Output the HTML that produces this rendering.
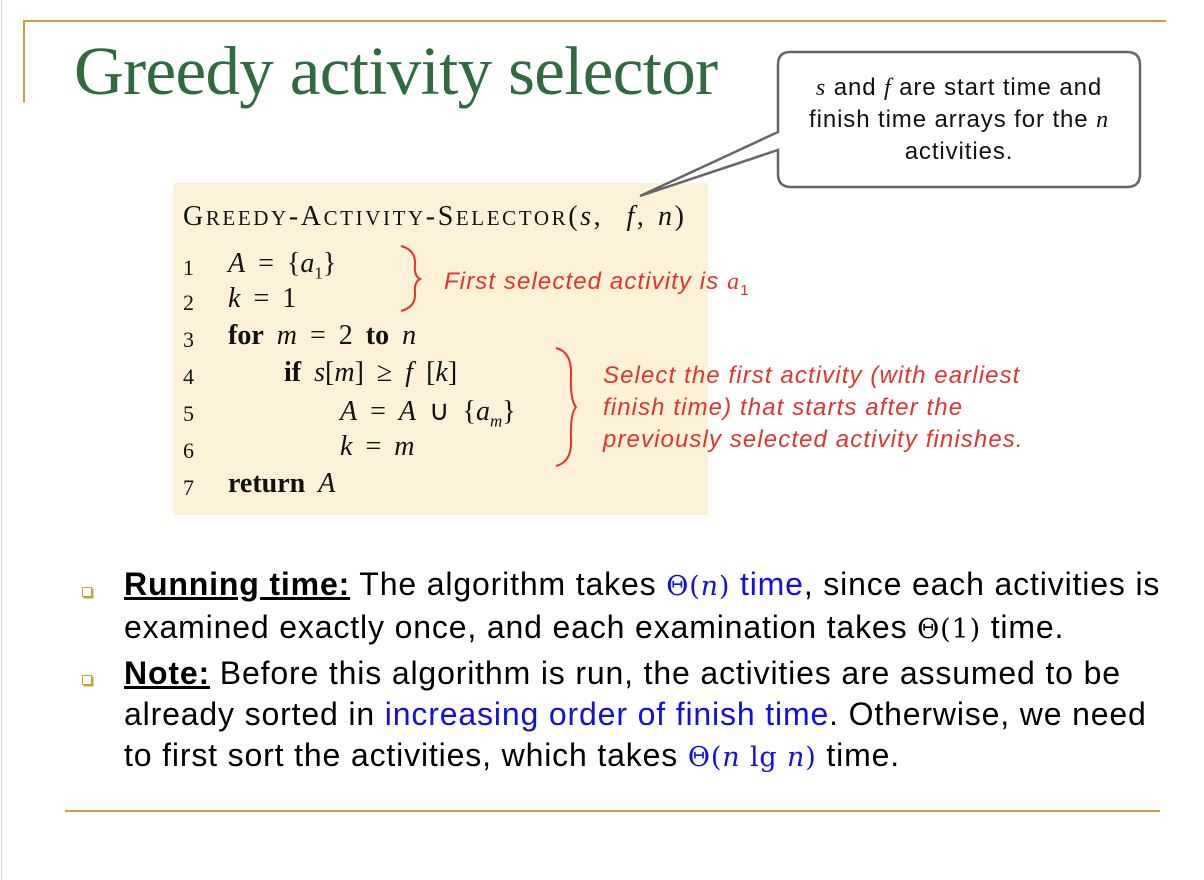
<!DOCTYPE html>
<html><head><meta charset="utf-8"><style>
body{margin:0;width:1204px;height:880px;background:#fff;position:relative;overflow:hidden;font-family:"Liberation Sans",sans-serif}
.a{position:absolute;white-space:nowrap}
.serif{font-family:"Liberation Serif",serif}
.code{font-family:"Liberation Serif",serif;font-size:28px;color:#111;word-spacing:6px}
.num{font-family:"Liberation Serif",serif;font-size:22px;color:#111}
.red{color:#e6332a;font-style:italic;font-size:24px;letter-spacing:1.1px}
.b{font-size:32px;color:#000;letter-spacing:0.85px}
.bl{color:#1010e0}
.m{font-family:"DejaVu Serif","Liberation Serif",serif;font-size:27px}
.sq{position:absolute;width:8px;height:8px;border:1.5px solid #c9a03a;background:#fff;box-shadow:1.5px 1.5px 0 #c9a03a}
</style></head><body>
<div class="a" style="left:1px;top:0;width:1px;height:880px;background:#d8d8d8"></div>
<div class="a" style="left:23px;top:20px;width:1143px;height:2px;background:#c9a03a"></div>
<div class="a" style="left:23px;top:20px;width:2px;height:82px;background:#c9a03a"></div>
<div class="a serif" style="left:74px;top:32px;font-size:69px;color:#2e6b3e;letter-spacing:-0.65px">Greedy activity selector</div>

<div class="a" style="left:173px;top:183px;width:535px;height:332px;background:#fdf2d8"></div>

<svg class="a" style="left:0;top:0" width="1204" height="880">
<path d="M790 52 H1127 Q1140 52 1140 65 V174 Q1140 187 1127 187 H791 Q778 187 778 174 V150 L640 196 L778 132 V65 Q778 52 790 52 Z" fill="#fff" stroke="#666" stroke-width="2.5"/>
<path d="M401 246 Q416 250 415 265 Q414 276 420 279 Q414 282 415 293 Q416 307 401 311" fill="none" stroke="#e6332a" stroke-width="2"/>
<path d="M556 348 Q572 352 571 375 Q570 400 576 407 Q570 414 571 440 Q572 462 556 466" fill="none" stroke="#e6332a" stroke-width="2"/>
</svg>
<div class="a" style="left:778px;top:72px;width:362px;text-align:center;font-size:24px;line-height:32px;color:#111;letter-spacing:0.9px">
<span class="serif" style="font-style:italic">s</span> and <span class="serif" style="font-style:italic">f</span> are start time and<br>finish time arrays for the <span class="serif" style="font-style:italic">n</span><br>activities.</div>

<div class="a code" style="left:183px;top:201px;font-size:28px;letter-spacing:2.6px;word-spacing:2px">G<span style="font-size:21px">REEDY</span>-A<span style="font-size:21px">CTIVITY</span>-S<span style="font-size:21px">ELECTOR</span>(<i>s</i>, &nbsp;<i>f</i>, <i>n</i>)</div>
<div class="a num" style="left:183px;top:255px">1</div><div class="a code" style="left:228px;top:248px"><i>A</i> = {<i>a</i><sub style="font-size:17px">1</sub>}</div>
<div class="a num" style="left:183px;top:290px">2</div><div class="a code" style="left:228px;top:283px"><i>k</i> = 1</div>
<div class="a num" style="left:183px;top:327px">3</div><div class="a code" style="left:228px;top:320px"><b>for</b> <i>m</i> = 2 <b>to</b> <i>n</i></div>
<div class="a num" style="left:183px;top:364px">4</div><div class="a code" style="left:284px;top:357px"><b>if</b> <i>s</i>[<i>m</i>] ≥ <i>f</i> [<i>k</i>]</div>
<div class="a num" style="left:183px;top:401px">5</div><div class="a code" style="left:340px;top:394px"><i>A</i> = <i>A</i> ∪ {<i>a<sub style="font-size:17px">m</sub></i>}</div>
<div class="a num" style="left:183px;top:438px">6</div><div class="a code" style="left:340px;top:431px"><i>k</i> = <i>m</i></div>
<div class="a num" style="left:183px;top:475px">7</div><div class="a code" style="left:228px;top:468px"><b>return</b> <i>A</i></div>

<div class="a red" style="left:444px;top:268px">First selected activity is <span class="serif">a</span><sub style="font-size:15px;font-style:normal">1</sub></div>
<div class="a red" style="left:603px;top:360px;line-height:32px">Select the first activity (with earliest<br>finish time) that starts after the<br>previously selected activity finishes.</div>

<div class="sq" style="left:82px;top:587px"></div>
<div class="sq" style="left:82px;top:675px"></div>
<div class="a b" style="left:124px;top:564px;line-height:41px"><b style="text-decoration:underline">Running time:</b> The algorithm takes <span class="bl"><span class="m">Θ(<i>n</i>)</span> time</span>, since each activities is<br>examined exactly once, and each examination takes <span class="m">Θ(1)</span> time.</div>
<div class="a b" style="left:124px;top:653px;line-height:41px"><b style="text-decoration:underline">Note:</b> Before this algorithm is run, the activities are assumed to be<br>already sorted in <span class="bl">increasing order of finish time</span>. Otherwise, we need<br>to first sort the activities, which takes <span class="bl m">Θ(<i>n</i> lg <i>n</i>)</span> time.</div>

<div class="a" style="left:65px;top:810px;width:1095px;height:2px;background:#c9a03a"></div>
</body></html>
